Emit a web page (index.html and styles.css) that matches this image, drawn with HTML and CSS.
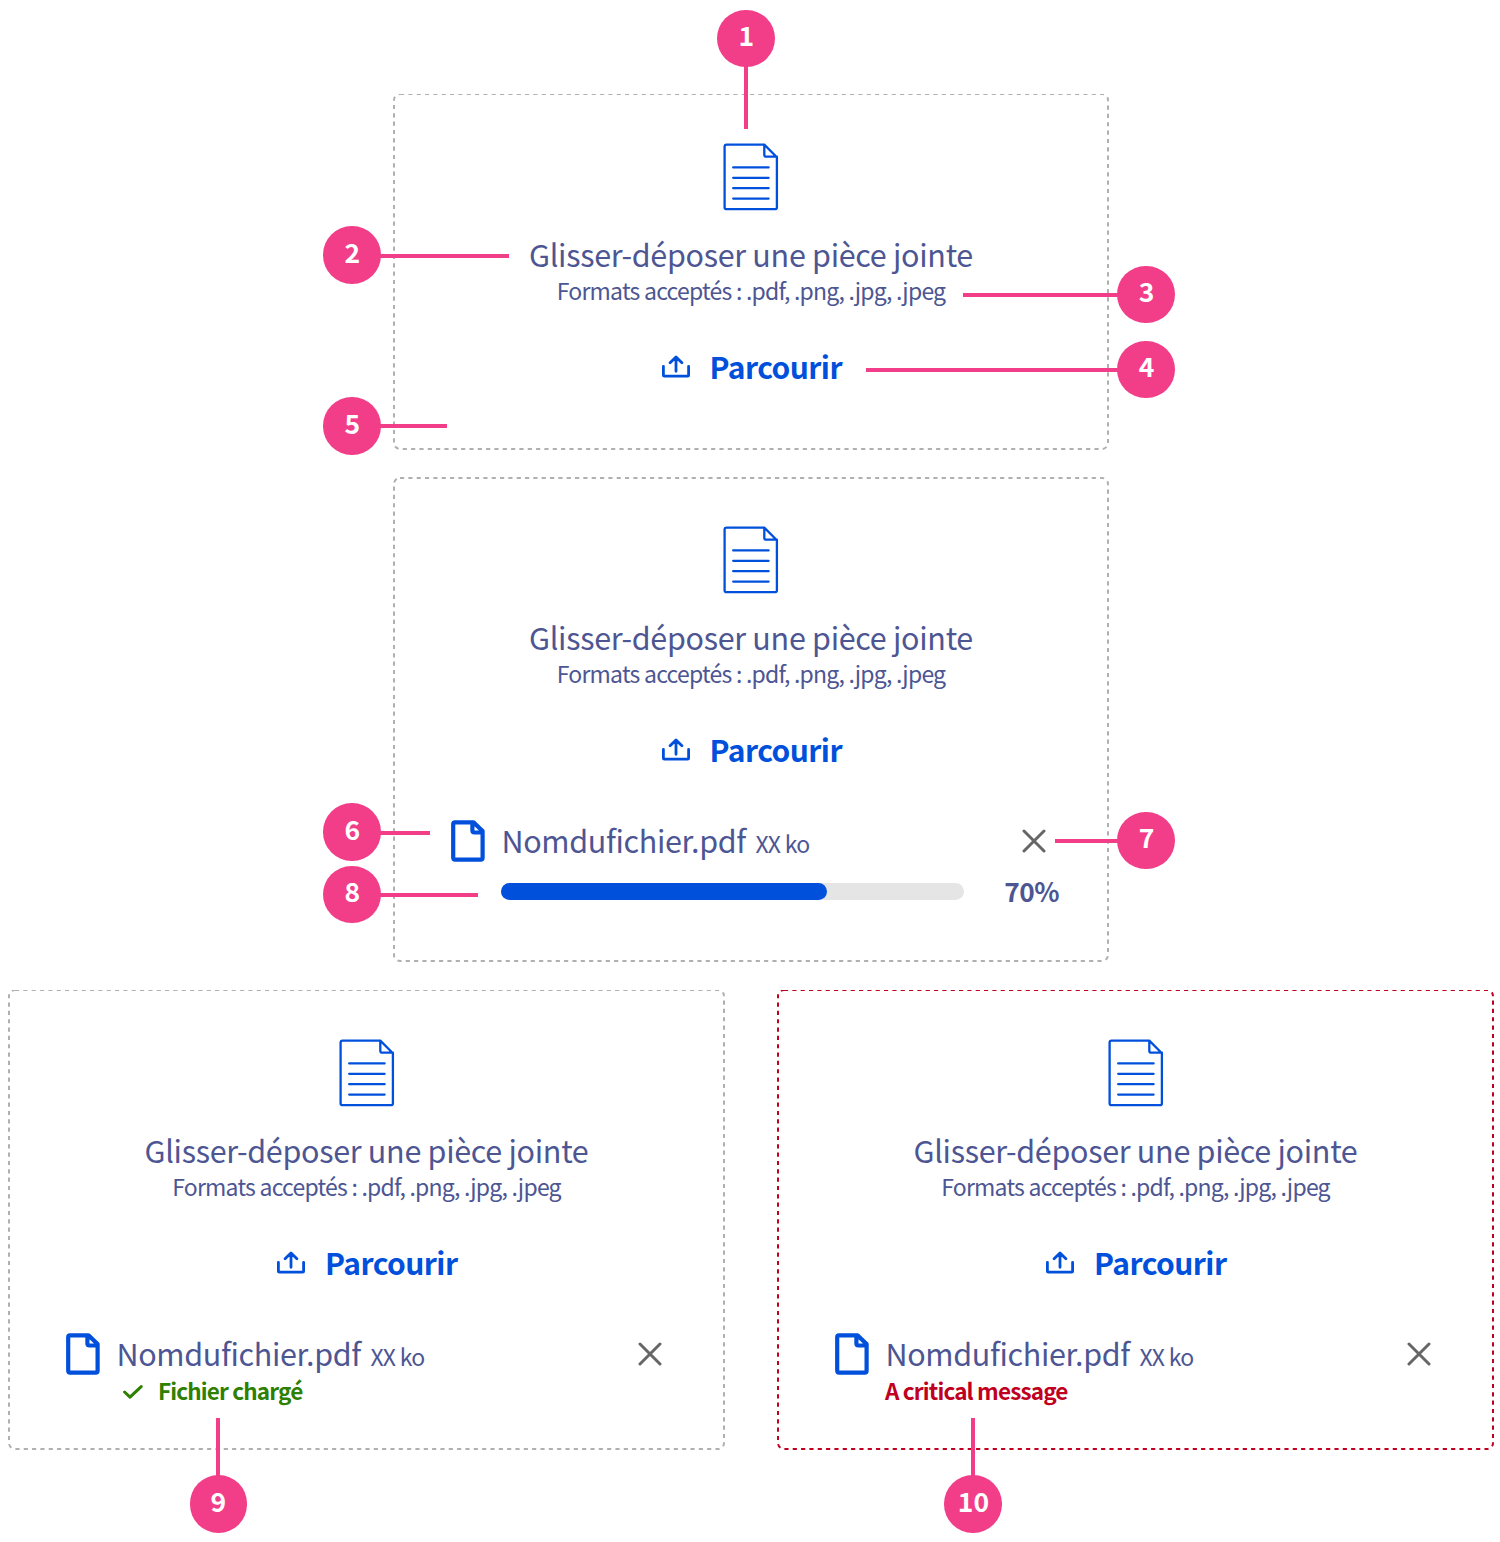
FILE: index.html
```html
<!DOCTYPE html>
<html lang="fr">
<head>
<meta charset="utf-8">
<title>Glisser-déposer une pièce jointe</title>
<link rel="stylesheet" href="styles.css">
</head>
<body>
<svg class="sprite" aria-hidden="true">
  <symbol id="doc" viewBox="0 0 56 68">
    <path d="M3.6 1.6H41.3L53.9 14.2V64.2Q53.9 66.2 51.9 66.2H3.6Q1.6 66.2 1.6 64.2V3.6Q1.6 1.6 3.6 1.6ZM41.3 1.6V11.7Q41.3 13.7 43.3 13.7H53.9M10.2 24.4H45.6M10.2 34.8H45.6M10.2 45.2H45.6M10.2 55.6H45.6"/>
  </symbol>
  <symbol id="upload" viewBox="0 0 28 24">
    <path d="M1.4 11.3V20.1Q1.4 21.2 2.5 21.2H25.5Q26.6 21.2 26.6 20.1V11.3M14 16.3V2.2M8.1 7.8L14 1.9L19.9 7.8"/>
  </symbol>
  <symbol id="file" viewBox="0 0 34 42">
    <path d="M4 2.4H22.5L31.6 11V37.8Q31.6 39.6 29.8 39.6H4Q2.2 39.6 2.2 37.8V4.2Q2.2 2.4 4 2.4ZM21.4 2.4V10.6Q21.4 12.5 23.3 12.5H31.6"/>
  </symbol>
  <symbol id="cross" viewBox="0 0 24 24">
    <path d="M2 2L22 22M22 2L2 22"/>
  </symbol>
  <symbol id="check" viewBox="0 0 20 16">
    <path d="M1.6 8L7 13.2L18.2 2.6"/>
  </symbol>
</svg>

<main class="board">
  <section class="card card-idle">
    <svg class="outline"><rect x="1" y="0" width="714" height="355" rx="6"/></svg>
    <svg class="doc"><use href="#doc"/></svg>
    <p class="title">Glisser-déposer une pièce jointe</p>
    <p class="formats">Formats acceptés : .pdf, .png, .jpg, .jpeg</p>
    <div class="browse"><svg><use href="#upload"/></svg><span>Parcourir</span></div>
  </section>

  <section class="card card-loading">
    <svg class="outline"><rect x="1" y="1" width="714" height="483" rx="6"/></svg>
    <svg class="doc"><use href="#doc"/></svg>
    <p class="title">Glisser-déposer une pièce jointe</p>
    <p class="formats">Formats acceptés : .pdf, .png, .jpg, .jpeg</p>
    <div class="browse"><svg><use href="#upload"/></svg><span>Parcourir</span></div>
    <div class="file-row">
      <svg class="file"><use href="#file"/></svg>
      <span class="name">Nomdufichier.pdf</span><span class="size">XX ko</span>
      <svg class="cross"><use href="#cross"/></svg>
    </div>
    <div class="progress">
      <div class="track"><div class="fill" style="width:70.5%"></div></div>
      <span class="percent">70%</span>
    </div>
  </section>

  <div class="pair">
    <section class="card card-result">
      <svg class="outline"><rect x="1" y="0" width="715" height="459" rx="6"/></svg>
      <svg class="doc"><use href="#doc"/></svg>
      <p class="title">Glisser-déposer une pièce jointe</p>
      <p class="formats">Formats acceptés : .pdf, .png, .jpg, .jpeg</p>
      <div class="browse"><svg><use href="#upload"/></svg><span>Parcourir</span></div>
      <div class="file-row">
        <svg class="file"><use href="#file"/></svg>
        <span class="name">Nomdufichier.pdf</span><span class="size">XX ko</span>
        <svg class="cross"><use href="#cross"/></svg>
      </div>
      <div class="status success"><svg><use href="#check"/></svg><span>Fichier chargé</span></div>
    </section>

    <section class="card card-result card-error">
      <svg class="outline"><rect x="1" y="0" width="715" height="459" rx="6"/></svg>
      <svg class="doc"><use href="#doc"/></svg>
      <p class="title">Glisser-déposer une pièce jointe</p>
      <p class="formats">Formats acceptés : .pdf, .png, .jpg, .jpeg</p>
      <div class="browse"><svg><use href="#upload"/></svg><span>Parcourir</span></div>
      <div class="file-row">
        <svg class="file"><use href="#file"/></svg>
        <span class="name">Nomdufichier.pdf</span><span class="size">XX ko</span>
        <svg class="cross"><use href="#cross"/></svg>
      </div>
      <div class="status critical"><span>A critical message</span></div>
    </section>
  </div>

  <div class="pin pin-1">1</div>
  <div class="pin pin-2">2</div>
  <div class="pin pin-3">3</div>
  <div class="pin pin-4">4</div>
  <div class="pin pin-5">5</div>
  <div class="pin pin-6">6</div>
  <div class="pin pin-7">7</div>
  <div class="pin pin-8">8</div>
  <div class="pin pin-9">9</div>
  <div class="pin pin-10">10</div>
</main>
</body>
</html>
```
FILE: styles.css
```css
* { box-sizing: border-box; }

body {
  margin: 0;
  background: #fff;
  color: #4d5693;
  font-family: "Noto Sans CJK SC", "Noto Sans CJK JP", "Noto Sans", sans-serif;
}

p { margin: 0; }
.sprite { display: none; }

.board {
  position: relative;
  width: 1500px;
  height: 1542px;
  padding: 94px 0 0 8px;
  display: flex;
  flex-direction: column;
  gap: 28px;
  overflow: hidden;
}

/* Drop zones */
.card {
  position: relative;
  width: 716px;
  padding: 49px 0 0;
  display: flex;
  flex-direction: column;
  align-items: center;
  flex-shrink: 0;
}
.card-idle { height: 355px; margin-left: 385px; }
.card-idle .outline { height: 356px; }
.card-loading { height: 485px; margin-left: 385px; }
.card-result { height: 460px; width: 717px; }
.pair { display: flex; gap: 52px; }

.outline {
  position: absolute;
  inset: 0;
  width: 100%;
  height: 100%;
  fill: none;
  stroke: #b0b0b0;
  stroke-width: 2;
  stroke-dasharray: 4.167;
}
.card-error .outline { stroke: #c00020; }

.doc {
  width: 56px;
  height: 68px;
  flex-shrink: 0;
  fill: none;
  stroke: #0050dc;
  stroke-width: 2.3;
  stroke-linecap: round;
  stroke-linejoin: round;
}

.title {
  margin-top: 23px;
  font-size: 30.5px;
  line-height: 40px;
  letter-spacing: -0.3px;
  white-space: nowrap;
}
.formats {
  margin-top: 1px;
  font-size: 23px;
  line-height: 30px;
  letter-spacing: -0.77px;
  white-space: nowrap;
}

.browse {
  margin: 41px 0 0 1.5px;
  display: flex;
  align-items: center;
  gap: 20px;
  color: #0050dc;
  font-size: 30px;
  font-weight: 700;
  line-height: 40px;
  letter-spacing: -0.55px;
}
.browse svg {
  width: 28px;
  height: 24px;
  margin-top: 1px;
  fill: none;
  stroke: #0050dc;
  stroke-width: 2.8;
  stroke-linecap: round;
  stroke-linejoin: round;
}

/* Attached file */
.file-row {
  align-self: stretch;
  height: 42px;
  margin-top: 51px;
  padding: 0 63px 0 58px;
  display: flex;
  align-items: baseline;
  line-height: 41px;
}
.file {
  width: 34px;
  height: 42px;
  align-self: center;
  fill: none;
  stroke: #0050dc;
  stroke-width: 4.2;
  stroke-linejoin: round;
}
.name { margin-left: 16.5px; font-size: 30.5px; letter-spacing: -0.35px; }
.size { margin-left: 9.5px; font-size: 23px; letter-spacing: -0.7px; }
.cross {
  width: 24px;
  height: 24px;
  margin-left: auto;
  align-self: center;
  fill: none;
  stroke: #666;
  stroke-width: 3;
  stroke-linecap: round;
}

.progress {
  align-self: stretch;
  margin-top: 14px;
  padding: 0 50px 0 107.5px;
  display: flex;
  align-items: center;
  justify-content: space-between;
}
.track {
  width: 463px;
  height: 16.7px;
  margin-top: -1px;
  border-radius: 9px;
  background: #e5e5e5;
}
.fill { height: 100%; border-radius: 9px; background: #0050dc; }
.percent {
  margin-top: -1px;
  padding-bottom: 1px;
  font-size: 26.25px;
  font-weight: 700;
  line-height: 32px;
  letter-spacing: -0.5px;
}

.status {
  align-self: flex-start;
  display: flex;
  align-items: center;
  margin: -1px 0 0 108px;
  font-size: 22.5px;
  font-weight: 700;
  line-height: 32px;
  letter-spacing: -0.85px;
}
.success { margin-left: 115px; gap: 15px; color: #2d8000; }
.success svg {
  width: 20px;
  height: 16px;
  margin-top: 4px;
  fill: none;
  stroke: #2d8000;
  stroke-width: 3;
  stroke-linecap: round;
  stroke-linejoin: round;
}
.critical { color: #c00020; }

/* Numbered callouts lying over the cards */
.pin {
  position: absolute;
  width: 57.5px;
  height: 57.5px;
  padding: 0 0 6px 1px;
  border-radius: 50%;
  background: #f23d89;
  color: #fff;
  display: flex;
  align-items: center;
  justify-content: center;
  font-size: 26.5px;
  font-weight: 700;
  line-height: 1;
}
.pin::before {
  content: "";
  position: absolute;
  background: #f23d89;
  height: 4.2px;
  top: 27.5px;
}
.pin-1 { left: 717.2px; top: 9.7px; }
.pin-1::before { left: 26.8px; top: 55px; width: 4px; height: 64px; }
.pin-2 { left: 323.2px; top: 226.2px; }
.pin-2::before { left: 56px; width: 130.3px; }
.pin-3 { left: 1117.3px; top: 265.7px; }
.pin-3::before { right: 56px; width: 156.3px; }
.pin-4 { left: 1117.3px; top: 340.7px; }
.pin-4::before { right: 56px; width: 253.3px; }
.pin-5 { left: 323.2px; top: 397px; }
.pin-5::before { left: 56px; top: 27px; width: 67.8px; }
.pin-6 { left: 323.2px; top: 803.3px; }
.pin-6::before { left: 56px; width: 51.3px; }
.pin-7 { left: 1117.3px; top: 811.5px; }
.pin-7::before { right: 56px; width: 63.8px; }
.pin-8 { left: 323.2px; top: 865.7px; }
.pin-8::before { left: 56px; width: 98.8px; }
.pin-9 { left: 189.7px; top: 1475px; padding-left: 0; }
.pin-9::before { left: 26.8px; top: -57px; width: 4px; height: 60px; }
.pin-10 { left: 944.2px; top: 1475px; }
.pin-10::before { left: 26.8px; top: -57px; width: 4px; height: 60px; }
```
